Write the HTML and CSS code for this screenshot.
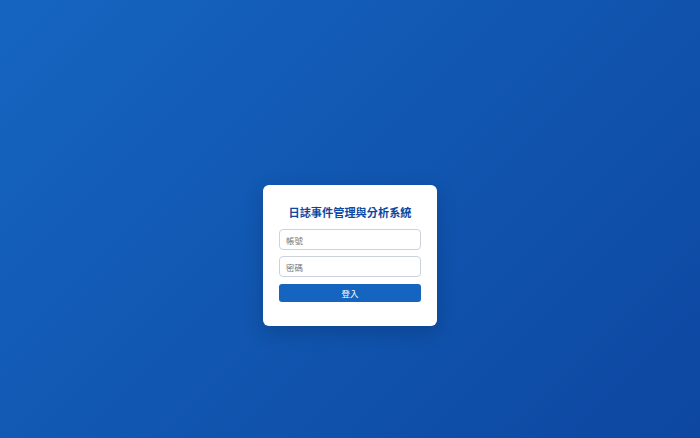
FILE: index.html
```html
<!DOCTYPE html>
<html lang="zh-Hant">
<head>
<meta charset="utf-8">
<title>日誌事件管理與分析系統</title>
<link rel="stylesheet" href="styles.css">
</head>
<body>
<div class="page">
  <form class="card">
    <h1 class="title">日誌事件管理與分析系統</h1>
    <input class="field" type="text" placeholder="帳號">
    <input class="field" type="password" placeholder="密碼">
    <button class="btn" type="button">登入</button>
  </form>
</div>
</body>
</html>
```
FILE: styles.css
```css
* { box-sizing: border-box; }
html, body { margin: 0; padding: 0; }
body {
  font-family: "Noto Sans", "Noto Sans CJK TC", sans-serif;
  background: linear-gradient(135deg, #1565c0 0%, #0d47a1 100%);
  min-height: 100vh;
}
.page {
  height: 438px;
  padding-top: 73px;
  display: flex;
  align-items: center;
  justify-content: center;
}
.card {
  width: 174px;
  background: #fff;
  border-radius: 6px;
  padding: 19px 16px 24px;
  display: flex;
  flex-direction: column;
  box-shadow: 0 6px 20px rgba(0, 0, 0, 0.18);
}
.title {
  margin: 0 0 9px;
  font-size: 11.2px;
  line-height: 16px;
  font-weight: 700;
  color: #0d47a1;
  text-align: center;
  font-family: "Noto Sans CJK TC", sans-serif;
}
.field {
  height: 21px;
  border: 1px solid #ccd3dc;
  border-radius: 4px;
  padding: 0 6px;
  font-size: 8.5px;
  font-family: "Noto Sans CJK TC", sans-serif;
  margin-bottom: 6px;
  color: #333;
}
.field::placeholder { color: #777; }
.field + .field { margin-bottom: 7px; }
.btn {
  height: 18px;
  border: none;
  border-radius: 3px;
  background: #1565c0;
  color: #fff;
  font-size: 8.5px;
  font-family: "Noto Sans CJK TC", sans-serif;
  padding: 0;
}
```
